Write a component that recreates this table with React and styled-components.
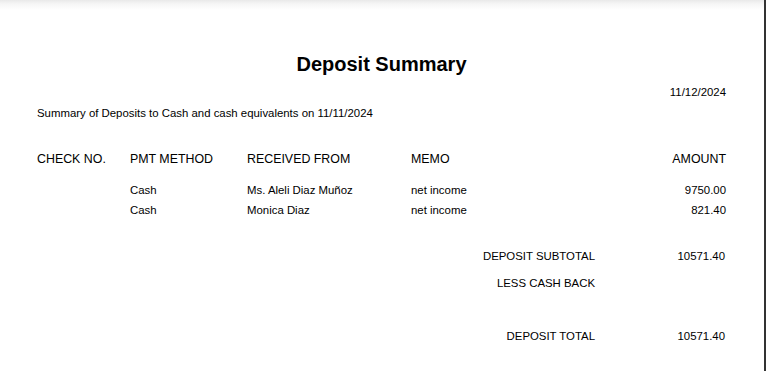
import React from "react";
import styled, { createGlobalStyle } from "styled-components";

const GlobalStyle = createGlobalStyle`
  html, body {
    margin: 0;
    padding: 0;
    background: #fff;
  }
  body {
    font-family: "Liberation Sans", Arial, sans-serif;
    color: #000;
  }
`;

const Page = styled.div`
  box-sizing: border-box;
  width: 766px;
  height: 371px;
  padding: 52px 38px 0 37px;
  border-right: 2px solid #333;
  background: linear-gradient(to bottom, #e9e9e9 0px, #f6f6f6 4px, #fff 10px);
  overflow: hidden;
`;

const Title = styled.h1`
  margin: 0;
  font-size: 20px;
  font-weight: 700;
  line-height: 24px;
  text-align: center;
`;

const DateLine = styled.div`
  margin-top: 9px;
  font-size: 11.4px;
  line-height: 14px;
  text-align: right;
`;

const Subtitle = styled.div`
  margin-top: 7px;
  font-size: 11.4px;
  line-height: 14px;
`;

const Table = styled.div`
  display: grid;
  grid-template-columns: 93px 117px 164px 1fr auto;
  margin-top: 32px;
`;

const HeadCell = styled.div`
  font-size: 12.4px;
  line-height: 14px;
  margin-bottom: 14px;
  text-align: ${(p) => (p.$right ? "right" : "left")};
`;

const Cell = styled.div`
  font-size: 11.4px;
  line-height: 20px;
  text-align: ${(p) => (p.$right ? "right" : "left")};
`;

const Totals = styled.div`
  display: grid;
  grid-template-columns: 1fr 131px;
  row-gap: 7px;
  margin-top: 26px;
`;

const TotalLabel = styled.div`
  font-size: 11.4px;
  line-height: 20px;
  text-align: right;
  margin-top: ${(p) => (p.$gap ? "26px" : "0")};
`;

const TotalValue = styled.div`
  font-size: 11.4px;
  line-height: 20px;
  text-align: right;
  padding-right: 1px;
  margin-top: ${(p) => (p.$gap ? "26px" : "0")};
`;

const deposits = [
  { check: "", method: "Cash", from: "Ms. Aleli Diaz Muñoz", memo: "net income", amount: "9750.00" },
  { check: "", method: "Cash", from: "Monica Diaz", memo: "net income", amount: "821.40" },
];

export default function App() {
  return (
    <>
      <GlobalStyle />
      <Page>
        <Title>Deposit Summary</Title>
        <DateLine>11/12/2024</DateLine>
        <Subtitle>Summary of Deposits to Cash and cash equivalents on 11/11/2024</Subtitle>

        <Table>
          <HeadCell>CHECK NO.</HeadCell>
          <HeadCell>PMT METHOD</HeadCell>
          <HeadCell>RECEIVED FROM</HeadCell>
          <HeadCell>MEMO</HeadCell>
          <HeadCell $right>AMOUNT</HeadCell>
          {deposits.map((d, i) => (
            <React.Fragment key={i}>
              <Cell>{d.check}</Cell>
              <Cell>{d.method}</Cell>
              <Cell>{d.from}</Cell>
              <Cell>{d.memo}</Cell>
              <Cell $right>{d.amount}</Cell>
            </React.Fragment>
          ))}
        </Table>

        <Totals>
          <TotalLabel>DEPOSIT SUBTOTAL</TotalLabel>
          <TotalValue>10571.40</TotalValue>
          <TotalLabel>LESS CASH BACK</TotalLabel>
          <TotalValue></TotalValue>
          <TotalLabel $gap>DEPOSIT TOTAL</TotalLabel>
          <TotalValue $gap>10571.40</TotalValue>
        </Totals>
      </Page>
    </>
  );
}
